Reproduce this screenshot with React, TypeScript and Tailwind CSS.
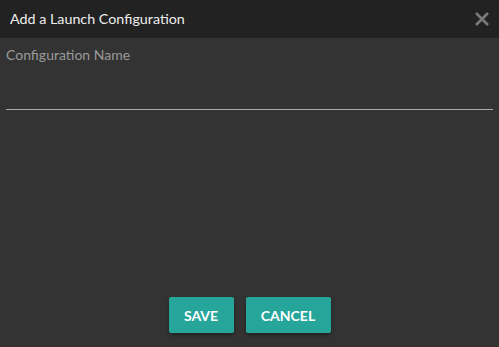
export default function App() {
  return (
    <div className="w-[499px] h-[347px] flex flex-col bg-[#333333] font-['Lato',sans-serif] overflow-hidden">
      <div className="h-[38px] shrink-0 bg-[#222222] flex items-center justify-between pl-[10px] pr-[9px]">
        <span className="text-[14.3px] text-[#eeeeee]">Add a Launch Configuration</span>
        <button className="w-[16px] h-[16px] flex items-center justify-center">
          <svg width="16" height="16" viewBox="0 0 16 16">
            <path d="M2 2 L14 14 M14 2 L2 14" stroke="#7a7a7a" strokeWidth="2.6" strokeLinecap="butt" />
          </svg>
        </button>
      </div>
      <div className="flex-1 flex flex-col px-[6px] pt-[8px]">
        <label className="text-[14px] text-[#9a9a9a] leading-[18px]">Configuration Name</label>
        <input className="mt-[10px] h-[36px] w-full bg-transparent border-b border-[#aaaaaa] outline-none text-[#eeeeee] text-[14px]" />
        <div className="flex-1" />
        <div className="flex justify-center gap-[12px] pb-[14px]">
          <button className="h-[36px] w-[65px] rounded-[2px] bg-[#26a69a] text-white text-[14px] font-bold shadow-[0_2px_4px_rgba(0,0,0,0.35)]">
            SAVE
          </button>
          <button className="h-[36px] w-[85px] rounded-[2px] bg-[#26a69a] text-white text-[14px] font-bold shadow-[0_2px_4px_rgba(0,0,0,0.35)]">
            CANCEL
          </button>
        </div>
      </div>
    </div>
  )
}
